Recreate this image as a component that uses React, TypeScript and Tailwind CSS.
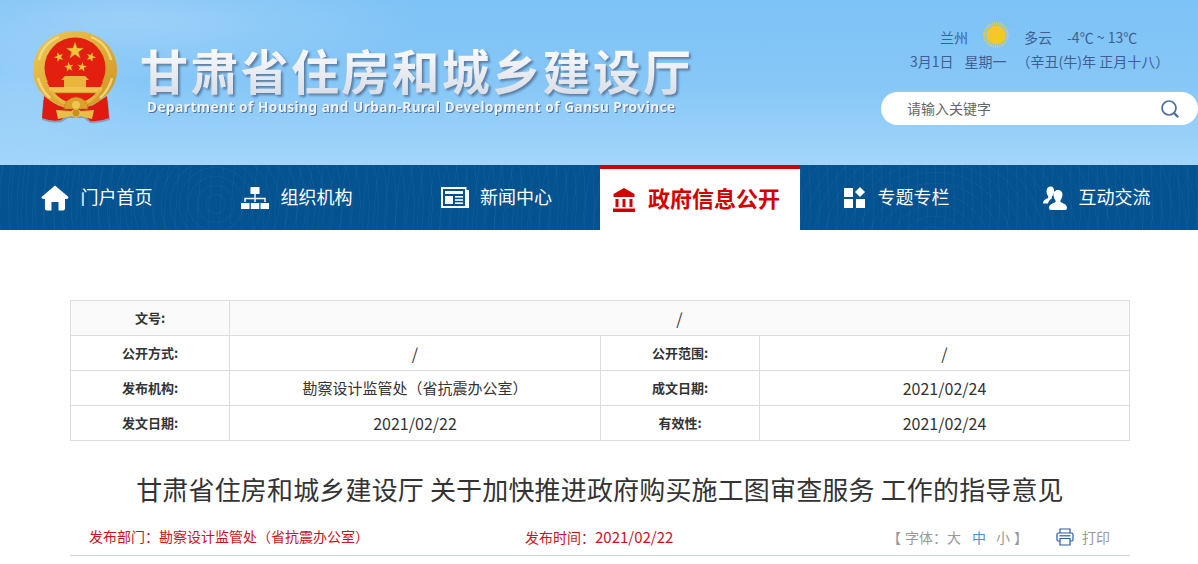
import type { ReactNode } from "react";

const FONT = "font-['Microsoft_YaHei','Noto_Sans_CJK_SC','Noto_Sans',sans-serif]";

function starPoints(cx: number, cy: number, r: number, rot = 0) {
  const pts: string[] = [];
  for (let i = 0; i < 10; i++) {
    const rad = i % 2 === 0 ? r : r * 0.4;
    const a = ((-90 + rot + i * 36) * Math.PI) / 180;
    pts.push(`${(cx + rad * Math.cos(a)).toFixed(2)},${(cy + rad * Math.sin(a)).toFixed(2)}`);
  }
  return pts.join(" ");
}

function Emblem() {
  return (
    <svg width="86" height="94" viewBox="0 0 86 94" className="shrink-0 blur-[0.4px]">
      <defs>
        <linearGradient id="gold" x1="0" y1="0" x2="1" y2="1">
          <stop offset="0" stopColor="#ecc95a" />
          <stop offset="0.5" stopColor="#e0ad38" />
          <stop offset="1" stopColor="#cc9426" />
        </linearGradient>
      </defs>
      {/* ribbons */}
      <path d="M11 70 L10 90 Q20 94 30 92 L36 88 L52 88 L58 93 Q68 94 78 90 L76 70 Z" fill="#6b4a3a" opacity="0.35" />
      <path d="M12 66 L10 88 Q20 92 29 90 L35 84 L52 84 L58 91 Q68 92 77 88 L75 66 L60 76 L27 76 Z" fill="#e01a10" />
      {/* wreath */}
      <path d="M43 1 C66 1 85 17 85 40 C85 53 78 64 66 72 C58 77 50 79 43 79 C36 79 28 77 20 72 C8 64 1 53 1 40 C1 17 20 1 43 1 Z" fill="url(#gold)" />
      <path d="M7 30 Q11 13 27 7 M79 30 Q75 13 59 7 M6 48 Q9 60 18 68 M80 48 Q77 60 68 68" stroke="#f5de85" strokeWidth="2.4" fill="none" opacity="0.85" />
      {/* red field */}
      <circle cx="43" cy="38" r="30.5" fill="#e3200f" />
      <path d="M15 52 Q24 72 43 73 Q62 72 71 52 Z" fill="#e3200f" />
      {/* stars */}
      <polygon points={starPoints(43, 21, 9)} fill="#f3c63a" stroke="#b9801a" strokeWidth="0.4" />
      <polygon points={starPoints(27, 27, 5, -20)} fill="#f0c036" />
      <polygon points={starPoints(37, 37, 5, -8)} fill="#f0c036" />
      <polygon points={starPoints(50, 37, 5, 8)} fill="#f0c036" />
      <polygon points={starPoints(59, 27, 5, 20)} fill="#f0c036" />
      {/* gate */}
      <path d="M33 46 L53 46 L57 50 L54 50 L54 57 L32 57 L32 50 L29 50 Z" fill="#e8b63a" />
      <path d="M17 57 L70 57 L70 61 L67 63 L20 63 L17 61 Z" fill="#f0c34e" />
      <path d="M20 63 H67" stroke="#b57a14" strokeWidth="0.8" />
      <path d="M17 60 Q28 77 43 78 Q58 77 70 60 L67 60 Q56 73 43 74 Q30 73 20 60 Z" fill="#e6b63e" />
      {/* gear */}
      <path d="M32 79 Q33 68 44 67 Q55 68 56 79 Z" fill="#d9a02a" stroke="#a9710e" strokeWidth="0.7" strokeDasharray="2 1" />
      <circle cx="44" cy="75" r="4" fill="#eec650" />
      {/* bow */}
      <path d="M24 80 L39 81 L44 78 L49 81 L62 80 L60 89 L48 86 L44 88 L40 86 L26 89 Z" fill="#e9bf46" />
      <circle cx="44" cy="83" r="3.4" fill="#c98e20" />
    </svg>
  );
}

function HomeIcon() {
  return (
    <svg width="28" height="26" viewBox="0 0 28 26" fill="#fff">
      <path d="M14 0.5 L27.5 12 Q27.6 14 25.5 14 H24 V23.5 Q24 25.5 22 25.5 H17.5 V17 H10.5 V25.5 H6 Q4 25.5 4 23.5 V14 H2.5 Q0.4 14 0.5 12 Z" />
    </svg>
  );
}

function OrgIcon() {
  return (
    <svg width="28" height="22" viewBox="0 0 28 22" fill="#fff">
      <rect x="9.5" y="0" width="9" height="7" />
      <path d="M13.3 7 H14.7 V10.8 H24.7 V15 H23.3 V12.2 H14.7 V15 H13.3 V12.2 H4.7 V15 H3.3 V10.8 H13.3 Z" />
      <rect x="0" y="16" width="8.5" height="6" />
      <rect x="9.8" y="16" width="8.5" height="6" />
      <rect x="19.5" y="16" width="8.5" height="6" />
    </svg>
  );
}

function NewsIcon() {
  return (
    <svg width="28" height="21" viewBox="0 0 28 21" fill="#fff">
      <path d="M0 0 H24 V2 H2 V19 H24 V21 H0 Z" />
      <path d="M24 0 V21 H28 V3 H25.5 V0 Z" />
      <rect x="4" y="4" width="18" height="3" />
      <rect x="4" y="9" width="8" height="8" />
      <rect x="14" y="9" width="8" height="1.6" />
      <rect x="14" y="12.2" width="8" height="1.6" />
      <rect x="14" y="15.4" width="8" height="1.6" />
    </svg>
  );
}

function BankIcon() {
  return (
    <svg width="22" height="24" viewBox="0 0 22 24" fill="#d40000">
      <path d="M11 0 L21.5 6 V9 H0.5 V6 Z" />
      <rect x="2.5" y="11" width="3" height="8" />
      <rect x="9.5" y="11" width="3" height="8" />
      <rect x="16.5" y="11" width="3" height="8" />
      <rect x="0" y="20.5" width="22" height="3.5" />
    </svg>
  );
}

function TopicIcon() {
  return (
    <svg width="21" height="21" viewBox="0 0 21 21" fill="#fff">
      <rect x="0" y="1" width="9" height="9" />
      <path d="M16 0 L21 5 L16 10 L11 5 Z" />
      <rect x="0" y="12" width="9" height="9" />
      <rect x="12" y="12" width="9" height="9" />
    </svg>
  );
}

function UsersIcon() {
  return (
    <svg width="24" height="24" viewBox="0 0 24 24" fill="#fff">
      <path d="M7.5 0.5 C10.5 0.5 11.5 3 11 6 C10.6 8 10 9.5 9 10.5 C8.6 11.5 8.6 12 9 12.6 C7 13.6 5.5 15 5 17.5 H0 C0 14 3 13.2 5 12 C5.4 11.5 5.4 11 5 10 C3.9 8.5 3.4 6.5 3.6 4.5 C3.9 2 5.4 0.5 7.5 0.5 Z" />
      <path d="M15 4 C18.4 4 19.8 6.5 19.4 9.6 C19.1 11.6 18.5 13 17.6 14.2 C17.2 15.2 17.4 15.8 18 16.2 C20.4 17.5 24 18.2 24 22 Q24 24 22 24 H8 Q6 24 6 22 C6 18.2 9.6 17.5 12 16.2 C12.6 15.8 12.8 15.2 12.4 14.2 C11.4 13 10.8 11.4 10.6 9.4 C10.3 6.4 11.8 4 15 4 Z" />
    </svg>
  );
}

function SearchIcon() {
  return (
    <svg width="18" height="18" viewBox="0 0 18 18" fill="none" stroke="#4a6da3">
      <circle cx="8" cy="8" r="7" strokeWidth="1.7" />
      <path d="M13 13 L16.5 16.5" strokeWidth="2.4" strokeLinecap="round" />
    </svg>
  );
}

function PrinterIcon() {
  return (
    <svg width="18" height="18" viewBox="0 0 18 18" fill="none" stroke="#2a5a9e" strokeWidth="1.2">
      <path d="M4 5 V1 H14 V5" />
      <rect x="1" y="5" width="16" height="8" rx="1.5" />
      <path d="M4 10.5 V17 H14 V10.5 Z" fill="#fff" />
      <path d="M3.5 7.8 H14.5" />
    </svg>
  );
}

const navItems: { label: string; icon: ReactNode; active?: boolean; gap: string }[] = [
  { label: "门户首页", icon: <HomeIcon />, gap: "gap-3" },
  { label: "组织机构", icon: <OrgIcon />, gap: "gap-3" },
  { label: "新闻中心", icon: <NewsIcon />, gap: "gap-[11px]" },
  { label: "政府信息公开", icon: <BankIcon />, active: true, gap: "gap-[13px]" },
  { label: "专题专栏", icon: <TopicIcon />, gap: "gap-[13px]" },
  { label: "互动交流", icon: <UsersIcon />, gap: "gap-3" },
];

function Label({ children }: { children: ReactNode }) {
  return <td className="border border-[#ddd] text-center text-[13px] font-bold text-[#333]">{children}</td>;
}

function Value({ children, span, text = "text-base" }: { children: ReactNode; span?: number; text?: string }) {
  return (
    <td colSpan={span} className={`border border-[#ddd] text-center text-[#333] ${text}`}>
      {children}
    </td>
  );
}

export default function App() {
  return (
    <div className={`h-screen overflow-hidden bg-white ${FONT}`}>
      {/* Header */}
      <header className="flex h-[165px] justify-between bg-[radial-gradient(ellipse_300px_60px_at_130px_20px,rgba(255,255,255,0.22),transparent),radial-gradient(ellipse_120px_70px_at_20px_90px,rgba(255,255,255,0.14),transparent),linear-gradient(180deg,#7dc2f6_0%,#86c7f7_50%,#a3d5fa_100%)]">
        <div className="flex items-start pl-8 pt-[30px]">
          <Emblem />
          <div className="ml-[22px] pt-[11px]">
            <h1 className="bg-gradient-to-b from-white to-[#d8dde6] bg-clip-text text-[48px] font-bold leading-[56px] tracking-[2.3px] text-transparent drop-shadow-[2px_2px_1px_rgba(70,95,130,0.7)]">
              甘肃省住房和城乡建设厅
            </h1>
            <p className="ml-[7px] mt-[2px] whitespace-nowrap text-[13.5px] font-bold leading-[17px] tracking-[0.57px] text-[#eef1f5] drop-shadow-[1px_1px_0.5px_rgba(70,95,130,0.8)] font-['Noto_Sans',sans-serif]">
              Department of Housing and Urban-Rural Development of Gansu Province
            </p>
          </div>
        </div>

        <div className="flex w-[317px] flex-col pt-[25px] text-sm text-[#3f5f93]">
          <div className="flex h-6 items-center pl-[59px]">
            <span>兰州</span>
            <svg width="26" height="26" viewBox="0 0 26 26" className="ml-[15px] -translate-y-0.5">
              <circle cx="13" cy="13" r="11.5" fill="none" stroke="#f5cf3a" strokeWidth="3" strokeDasharray="1 1" opacity="0.8" />
              <circle cx="13" cy="13" r="9.5" fill="#f5c82a" />
            </svg>
            <span className="ml-[15px]">多云</span>
            <span className="ml-[15px] whitespace-nowrap">-4℃ ~ 13℃</span>
          </div>
          <div className="flex h-6 items-center whitespace-nowrap pl-[29px]">
            <span>3月1日</span>
            <span className="ml-[11px]">星期一</span>
            <span className="ml-[10px]">（辛丑(牛)年 正月十八）</span>
          </div>
          <div className="mt-[19px] flex h-[33px] items-center justify-between rounded-full bg-white pl-[26px] pr-[19px]">
            <span className="-translate-y-px text-[#666]">请输入关键字</span>
            <SearchIcon />
          </div>
        </div>
      </header>

      {/* Nav */}
      <nav className="grid h-[65px] grid-cols-[repeat(6,200px)] bg-[#04528f] bg-[repeating-radial-gradient(circle_at_18%_60%,rgba(255,255,255,0.035)_0_1px,transparent_1px_9px),repeating-radial-gradient(circle_at_78%_130%,rgba(255,255,255,0.03)_0_1px,transparent_1px_11px)]">
        {navItems.map((item) =>
          item.active ? (
            <a key={item.label} className={`flex items-center justify-center border-t-4 border-[#d40000] bg-white pr-[7px] ${item.gap}`}>
              {item.icon}
              <span className="-translate-y-[2px] text-[22px] font-bold text-[#d40000]">{item.label}</span>
            </a>
          ) : (
            <a key={item.label} className={`flex items-center justify-center pr-[7px] text-lg text-white ${item.gap}`}>
              {item.icon}
              <span className="-translate-y-[2px]">{item.label}</span>
            </a>
          ),
        )}
      </nav>

      {/* Content */}
      <main className="ml-[70px] w-[1060px] pt-[70px]">
        <table className="w-full table-fixed border-collapse">
          <colgroup>
            <col className="w-[159px]" />
            <col className="w-[371px]" />
            <col className="w-[159px]" />
            <col />
          </colgroup>
          <tbody>
            <tr className="h-[35px] bg-[#fafafa]">
              <Label>文号:</Label>
              <Value span={3}>/</Value>
            </tr>
            <tr className="h-[35px]">
              <Label>公开方式:</Label>
              <Value>/</Value>
              <Label>公开范围:</Label>
              <Value>/</Value>
            </tr>
            <tr className="h-[35px]">
              <Label>发布机构:</Label>
              <Value text="text-[15px]">勘察设计监管处（省抗震办公室）</Value>
              <Label>成文日期:</Label>
              <Value>2021/02/24</Value>
            </tr>
            <tr className="h-[35px]">
              <Label>发文日期:</Label>
              <Value>2021/02/22</Value>
              <Label>有效性:</Label>
              <Value>2021/02/24</Value>
            </tr>
          </tbody>
        </table>

        <h2 className="mt-[29px] whitespace-nowrap text-center text-[26px] leading-[38px] tracking-[0.16px] text-[#333]">
          甘肃省住房和城乡建设厅 关于加快推进政府购买施工图审查服务 工作的指导意见
        </h2>

        <div className="mt-[10px] flex h-[38px] items-center justify-between border-b border-[#c5d5e5] pl-[19px] pr-5 text-sm">
          <div className="flex text-[#d01020]">
            <span className="w-[436px]">发布部门：勘察设计监管处（省抗震办公室）</span>
            <span>
              发布时间：<span className="text-[15px]">2021/02/22</span>
            </span>
          </div>
          <div className="flex items-center text-[#999]">
            <span>【</span>
            <span className="ml-1">字体：</span>
            <span>大</span>
            <span className="ml-[11px] text-[#4a90e2]">中</span>
            <span className="ml-[10px]">小</span>
            <span className="ml-[4px]">】</span>
            <span className="ml-[28px]">
              <PrinterIcon />
            </span>
            <span className="ml-2">打印</span>
          </div>
        </div>
      </main>
    </div>
  );
}
